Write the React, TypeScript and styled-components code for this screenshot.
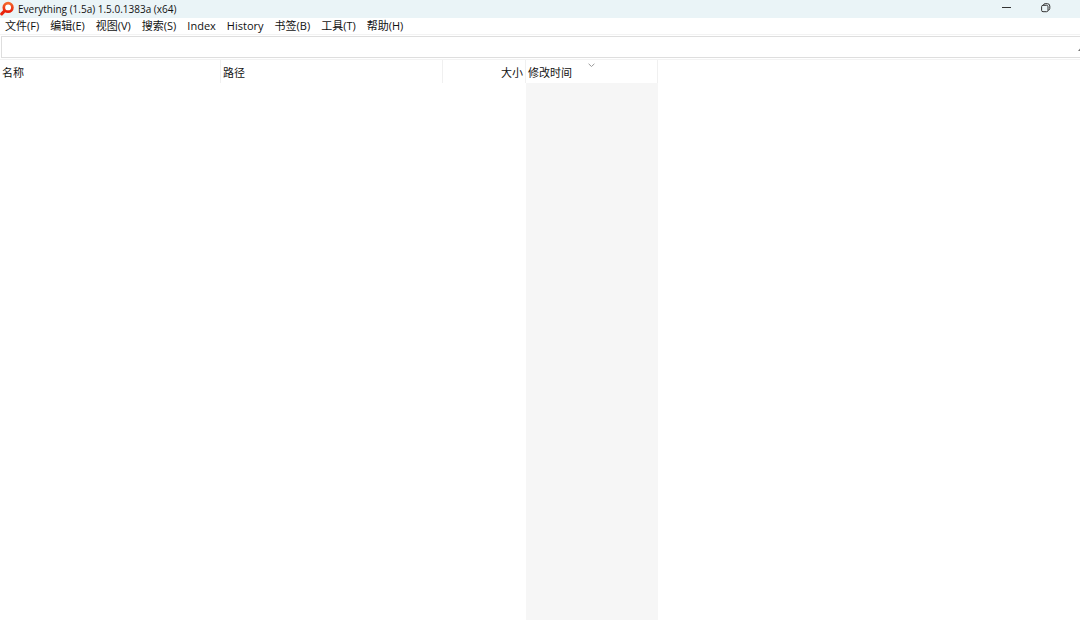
import React from "react";
import styled, { createGlobalStyle } from "styled-components";

const Global = createGlobalStyle`
  * { box-sizing: border-box; }
  html, body { margin: 0; background: #fff; }
  body, button, input {
    font-family: "Open Sans", "Noto Sans CJK SC", sans-serif;
    font-size: 11px;
    color: #111;
  }
`;

const Window = styled.div`
  display: flex;
  flex-direction: column;
  min-height: 100vh;
  overflow: hidden;
`;

const TitleBar = styled.header`
  display: flex;
  align-items: center;
  height: 18px;
  background: #eaf4f7;
`;

const Title = styled.h1`
  flex: 1;
  margin: 0 0 0 3px;
  font-size: 10px;
  font-weight: 400;
  line-height: 18px;
  white-space: nowrap;
`;

const WindowButton = styled.button`
  display: flex;
  align-items: center;
  justify-content: center;
  width: 39px;
  height: 16px;
  padding: 0;
  border: 0;
  background: transparent;
`;

const WindowButtons = styled.div`
  display: flex;
  align-self: flex-start;
  padding-right: 15px;
`;

const MenuBar = styled.nav`
  display: flex;
  gap: 11px;
  height: 17px;
  padding-left: 5px;
  border-bottom: 1px solid #f3f3f3;
`;

const MenuItem = styled.button`
  padding: 0;
  border: 0;
  background: transparent;
  line-height: 16px;
  white-space: nowrap;
`;

const SearchBar = styled.div`
  display: flex;
  align-items: center;
  height: 22px;
  margin: 1px 0 1px 1px;
  border: 1px solid #dedede;
  border-right: 0;
`;

const SearchInput = styled.input`
  flex: 1;
  min-width: 0;
  height: 20px;
  padding: 0 4px;
  border: 0;
  outline: 0;
  background: transparent;
`;

const Results = styled.table`
  flex: 1;
  width: 100%;
  table-layout: fixed;
  border-collapse: separate;
  border-spacing: 0;
  border-top: 1px solid #f3f3f3;
`;

const Column = styled.col<{ $width?: number }>`
  width: ${(p) => (p.$width ? `${p.$width}px` : "auto")};
`;

const HeadCell = styled.th<{ $align?: "left" | "right" }>`
  position: relative;
  height: 23px;
  padding: 2px 2px 0;
  border-right: 1px solid #f0f0f0;
  font-weight: 400;
  line-height: 21px;
  text-align: ${(p) => p.$align ?? "left"};
  white-space: nowrap;
`;

const FillerHead = styled.td`
  padding: 0;
`;

const SortMark = styled.svg`
  position: absolute;
  top: 3px;
  left: 50%;
  margin-left: -4px;
`;

const Cell = styled.td<{ $sorted?: boolean }>`
  padding: 0;
  background: ${(p) => (p.$sorted ? "#f6f6f6" : "transparent")};
`;

const menus = ["文件(F)", "编辑(E)", "视图(V)", "搜索(S)", "Index", "History", "书签(B)", "工具(T)", "帮助(H)"];

const columns: { label: string; width: number; align?: "right"; sorted?: boolean }[] = [
  { label: "名称", width: 221 },
  { label: "路径", width: 222 },
  { label: "大小", width: 83, align: "right" },
  { label: "修改时间", width: 132, sorted: true },
];

const Logo = () => (
  <svg width="15" height="17" viewBox="0 0 15 17" aria-hidden="true">
    <defs>
      <linearGradient id="lens" x1="0" y1="0" x2="0" y2="1">
        <stop offset="0" stopColor="#f5672c" />
        <stop offset="1" stopColor="#e8200c" />
      </linearGradient>
    </defs>
    <path d="M4.7 9.8 1.7 12.9" stroke="#e9260e" strokeWidth="3" strokeLinecap="round" />
    <circle cx="8.1" cy="6.4" r="4.3" fill="#fff" stroke="url(#lens)" strokeWidth="2.7" />
  </svg>
);

export default function App() {
  return (
    <Window>
      <Global />
      <TitleBar>
        <Logo />
        <Title>Everything (1.5a) 1.5.0.1383a (x64)</Title>
        <WindowButtons>
          <WindowButton aria-label="Minimize">
            <svg width="10" height="10" viewBox="0 0 10 10">
              <path d="M0 4.5h9" stroke="#333" />
            </svg>
          </WindowButton>
          <WindowButton aria-label="Restore">
            <svg width="10" height="10" viewBox="0 0 10 10" fill="none" stroke="#333">
              <rect x=".6" y="2.3" width="6.4" height="6.4" rx="1.4" />
              <path d="M2.4 2.1Q2.7.7 4.1.7h2.3q2.4 0 2.4 2.4v2.3q0 1.6-1.6 1.9" />
            </svg>
          </WindowButton>
        </WindowButtons>
      </TitleBar>
      <MenuBar>
        {menus.map((m) => (
          <MenuItem key={m}>{m}</MenuItem>
        ))}
      </MenuBar>
      <SearchBar>
        <SearchInput type="text" aria-label="搜索" />
        <svg width="2" height="20" viewBox="0 0 2 20" aria-hidden="true">
          <path d="M0 14 2 11.5V14Z" fill="#777" />
        </svg>
      </SearchBar>
      <Results>
        <colgroup>
          {columns.map((c) => (
            <Column key={c.label} $width={c.width} />
          ))}
          <Column />
        </colgroup>
        <thead>
          <tr>
            {columns.map((c) => (
              <HeadCell key={c.label} scope="col" $align={c.align} aria-sort={c.sorted ? "descending" : undefined}>
                {c.label}
                {c.sorted && (
                  <SortMark width="7" height="5" viewBox="0 0 7 5" aria-hidden="true">
                    <path d="M.6.8 3.5 3.5 6.4.8" fill="none" stroke="#999" />
                  </SortMark>
                )}
              </HeadCell>
            ))}
            <FillerHead />
          </tr>
        </thead>
        <tbody>
          <tr>
            {columns.map((c) => (
              <Cell key={c.label} $sorted={c.sorted} />
            ))}
            <Cell />
          </tr>
        </tbody>
      </Results>
    </Window>
  );
}
